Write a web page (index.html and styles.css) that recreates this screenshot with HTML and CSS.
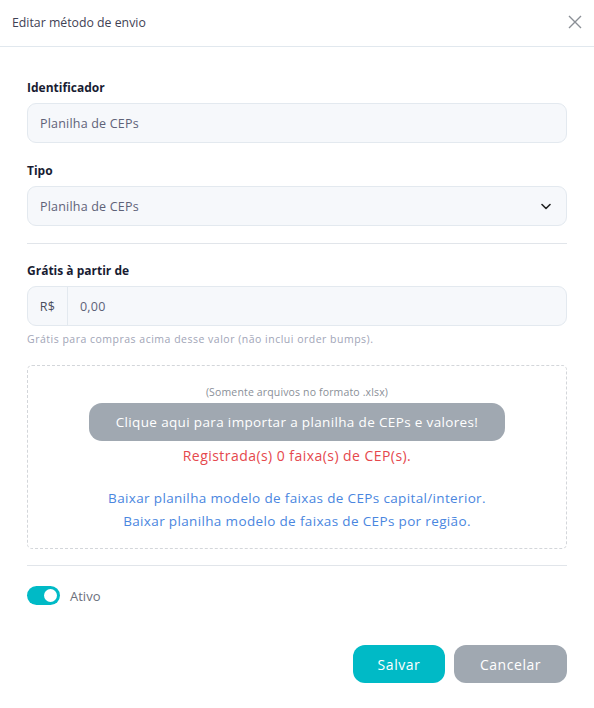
FILE: index.html
```html
<!DOCTYPE html>
<html lang="pt-BR">
<head>
<meta charset="utf-8">
<link rel="stylesheet" href="styles.css">
</head>
<body>
<div class="modal">
  <header class="modal-header">
    <h1 class="modal-title">Editar método de envio</h1>
    <button class="close-btn" aria-label="Fechar">
      <svg width="14" height="14" viewBox="0 0 14 14"><path d="M1 1L13 13M13 1L1 13" stroke="#8a8f96" stroke-width="1.4" fill="none"/></svg>
    </button>
  </header>
  <div class="modal-body">
    <div class="field">
      <label class="label">Identificador</label>
      <div class="input">Planilha de CEPs</div>
    </div>
    <div class="field">
      <label class="label">Tipo</label>
      <div class="input select">
        <span>Planilha de CEPs</span>
        <svg width="10" height="7" viewBox="0 0 10 7"><path d="M1 1.5L5 5.5L9 1.5" stroke="#222" stroke-width="1.6" fill="none" stroke-linecap="round" stroke-linejoin="round"/></svg>
      </div>
    </div>
    <hr class="divider first">
    <div class="field">
      <label class="label">Grátis à partir de</label>
      <div class="input-group">
        <span class="prefix">R$</span>
        <span class="group-value">0,00</span>
      </div>
      <p class="help">Grátis para compras acima desse valor (não inclui order bumps).</p>
    </div>
    <div class="upload">
      <p class="upload-note">(Somente arquivos no formato .xlsx)</p>
      <button class="import-btn">Clique aqui para importar a planilha de CEPs e valores!</button>
      <p class="registered">Registrada(s) 0 faixa(s) de CEP(s).</p>
      <div class="links">
        <a class="link">Baixar planilha modelo de faixas de CEPs capital/interior.</a>
        <a class="link">Baixar planilha modelo de faixas de CEPs por região.</a>
      </div>
    </div>
    <hr class="divider second">
    <div class="toggle-row">
      <span class="toggle"><span class="knob"></span></span>
      <span class="toggle-label">Ativo</span>
    </div>
    <div class="actions">
      <button class="btn btn-primary">Salvar</button>
      <button class="btn btn-secondary">Cancelar</button>
    </div>
  </div>
</div>
</body>
</html>
```
FILE: styles.css
```css
* { box-sizing: border-box; }
html, body { margin: 0; padding: 0; background: #fff; }
body {
  font-family: "Open Sans", "Noto Sans", sans-serif;
  color: #3f4254;
  width: 594px;
  height: 708px;
  overflow: hidden;
}
.modal { width: 594px; }
.modal-header {
  height: 47px;
  border-bottom: 1px solid #e1e8ee;
  display: flex;
  align-items: center;
  justify-content: space-between;
  padding: 0 12px 2px 12px;
}
.modal-title {
  margin: 0;
  font-size: 12.3px;
  font-weight: 400;
  color: #3f4254;
}
.close-btn {
  background: none;
  border: 0;
  padding: 0;
  width: 14px;
  height: 14px;
  display: flex;
  cursor: pointer;
}
.modal-body {
  padding: 33px 27px 0 27px;
  display: flex;
  flex-direction: column;
}
.field { display: flex; flex-direction: column; }
.field + .field { margin-top: 20px; }
.label {
  font-size: 12px;
  font-weight: 700;
  color: #181c32;
  line-height: 16px;
  margin-bottom: 7px;
}
.input {
  height: 40px;
  border: 1px solid #e3e9ef;
  background: #f6f8fb;
  border-radius: 9px;
  padding: 0 12px;
  display: flex;
  align-items: center;
  font-size: 12.5px;
  letter-spacing: 0.2px;
  color: #5e6278;
}
.select { justify-content: space-between; padding-right: 15px; }
.divider {
  border: 0;
  border-top: 1px solid #e1e5ea;
  margin: 0;
}
.divider.first { margin-top: 17px; margin-bottom: 19px; }
.input-group {
  height: 40px;
  border: 1px solid #e3e9ef;
  background: #f6f8fb;
  border-radius: 9px;
  display: flex;
  align-items: stretch;
  font-size: 12.5px;
  letter-spacing: 0.2px;
}
.prefix {
  width: 40px;
  display: flex;
  align-items: center;
  justify-content: center;
  border-right: 1px solid #e3e9ef;
  color: #4a4e5c;
}
.group-value {
  display: flex;
  align-items: center;
  padding-left: 12px;
  color: #5e6278;
}
.help {
  margin: 6px 0 0 0;
  font-size: 10.5px;
  letter-spacing: 0.5px;
  color: #a1a5b7;
  line-height: 14px;
}
.upload {
  margin-top: 19px;
  height: 184px;
  border: 1px dashed #d3d6da;
  border-radius: 5px;
  display: flex;
  flex-direction: column;
  align-items: center;
  padding-top: 19px;
}
.upload-note {
  margin: 0;
  font-size: 10.5px;
  letter-spacing: 0.15px;
  color: #8a8f98;
  line-height: 14px;
}
.import-btn {
  margin-top: 4px;
  width: 416px;
  height: 38px;
  border: 0;
  border-radius: 13px;
  background: #a0a8b1;
  color: #fff;
  font-family: inherit;
  font-size: 13.5px;
  letter-spacing: 0.35px;
  font-weight: 500;
}
.registered {
  margin: 7px 0 0 0;
  font-size: 14px;
  letter-spacing: 0.45px;
  color: #e5484d;
  line-height: 16px;
}
.links {
  margin-top: 26px;
  display: flex;
  flex-direction: column;
  align-items: center;
  gap: 7px;
}
.link {
  font-size: 13.5px;
  letter-spacing: 0.35px;
  color: #4a86e0;
  line-height: 16px;
}
.divider.second { margin-top: 16px; }
.toggle-row {
  margin-top: 20px;
  display: flex;
  align-items: center;
  gap: 10px;
}
.toggle {
  width: 33px;
  height: 19px;
  background: #00bac6;
  border-radius: 10px;
  display: flex;
  align-items: center;
  justify-content: flex-end;
  padding-right: 3px;
}
.knob {
  width: 13px;
  height: 13px;
  border-radius: 50%;
  background: #fff;
}
.toggle-label {
  font-size: 13px;
  color: #6c707c;
}
.actions {
  margin-top: 40px;
  display: flex;
  justify-content: flex-end;
  gap: 9px;
}
.btn {
  height: 38px;
  border: 0;
  border-radius: 12px;
  color: #fff;
  font-family: inherit;
  font-size: 14px;
  letter-spacing: 0.55px;
  font-weight: 500;
}
.btn-primary { width: 92px; background: #00bac6; }
.btn-secondary { width: 113px; background: #a0a8b1; }
```
